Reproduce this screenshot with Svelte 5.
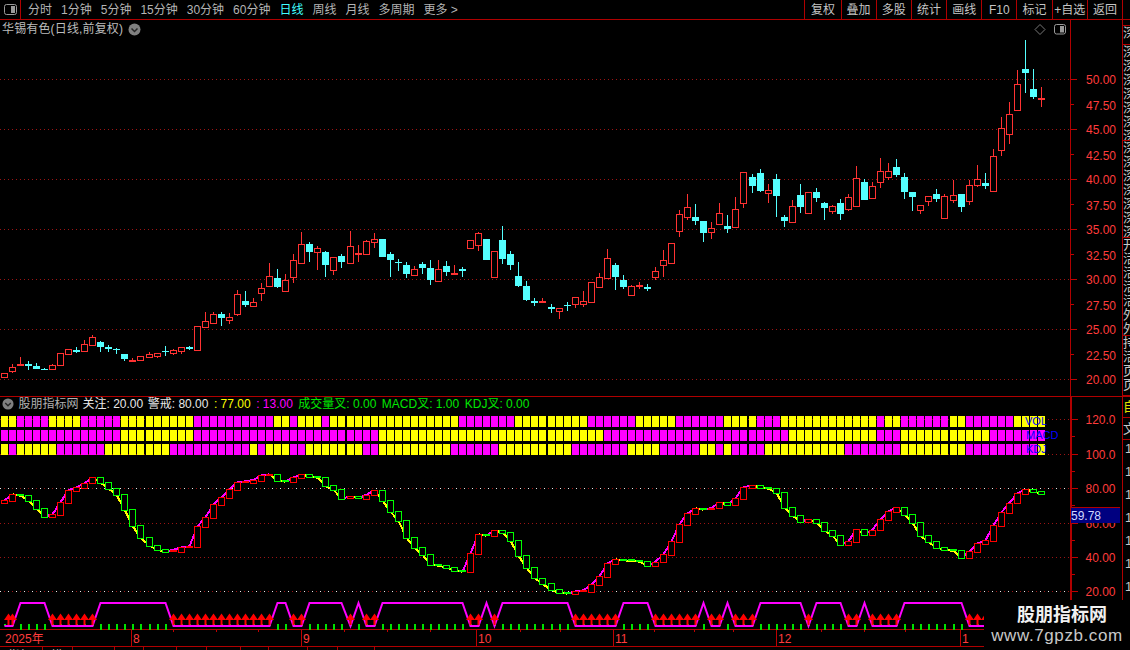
<script>
  const px = (i) => Math.floor(4.3 + 8.04 * i);

  const group = (y0, s) =>
    s.trim().split(/\s+/).map((t) => {
      const n = t.slice(1).split(',').map((v) => y0 + Number(v) / 3);
      return { up: t[0] === 'r', hi: n[0], top: n[1], bot: n[2], lo: n[3] };
    });

  const candles = [
    ...group(220, `r458,458,472,472 r432,440,452,458 r412,433,437,437 c424,432,437,450 c430,438,446,446 c445,447,449,449
      r433,436,448,449 r400,400,436,437 r388,388,403,403 c381,390,396,399 r361,373,394,395 r346,352,374,378 c363,366,380,396
      c376,380,386,396 c383,386,389,402 c402,402,416,423 r415,421,425,425 r409,409,421,422 r397,403,410,413 r399,400,407,414
      c378,393,396,408 r388,391,400,405 r382,382,392,402 c378,382,386,390 r319,319,389,389 r277,304,320,323 r277,283,308,308
      c277,282,293,318 r280,290,299,312 r210,223,281,287 c213,243,255,261 r235,247,257,257 r190,205,220,243 r129,169,197,197
      c148,174,200,204 r163,181,212,212 r102,121,170,189 r37,73,128,128 c67,72,96,126 r79,85,95,150 c94,96,134,171
      r112,112,149,164 c102,108,126,144 r33,79,128,128 r75,99,101,126 r60,64,101,105 r39,58,65,84 c57,57,111,111
      c96,102,120,171 c118,126,129,153 c126,135,162,174 r139,148,164,164 c126,132,144,162 c120,144,180,195 r120,148,182,183
      c123,138,156,168 r135,159,162,165 c141,147,153,171 r61,61,83,87 r37,40,74,93 c57,57,120,120 r93,94,170,170
      c18,60,117,132 c94,102,135,150 c126,168,198,201 c183,198,240,243 c235,243,249,258 r235,243,245,250 c252,261,267,279
      r265,265,272,297 c246,255,258,273 r232,232,251,264 r213,244,251,261 r186,187,245,245 r159,172,201,204 r87,115,173,173
      c129,135,171,210 c165,180,201,207 r195,199,224,224 r186,195,201,207 c192,201,207,213 r141,154,171,180 r90,121,134,171
      r69,69,128,128`),
    ...group(140, `r210,223,272,291 r162,202,230,240 c192,232,243,255 c243,243,279,306 r246,265,277,297 r189,220,251,255
      c225,258,267,279 r171,208,260,260 r97,97,188,204 c102,111,138,159 c87,99,153,156 r132,151,158,189 c102,117,168,231
      c225,231,243,261 r180,199,245,245 c132,165,201,219 r156,157,218,222 c144,156,174,186 c186,189,204,240 r195,199,212,222
      c177,189,222,240 r162,172,206,213 r78,115,197,197 c117,126,180,180 r126,139,173,177 r54,92,125,144 r69,92,110,120
      c57,81,105,111 c99,111,156,177 c156,156,171,213 r195,196,209,222 r169,169,182,198 c147,162,177,186 r162,169,233,237
      r120,166,179,189 c162,162,201,216 r120,136,182,195 r75,118,134,141 c99,129,138,147 r27,49,152,152`),
    ...group(0, `r351,384,449,468 r306,343,402,432 r210,253,331,331 c120,208,218,279 c207,268,290,297 r262,295,301,320`)
  ].map((c, i) => ({ ...c, x: px(i) }));

  const boxSrc = `r271,278 r253,272 g253,257 g256,272 g271,296 g295,320 r313,320 r277,314 r240,278 r232,242 r220,233 r202,220
    g202,218 g217,236 g235,254 g253,299 g298,347 g346,383 g382,407 g406,420 g418,425 r419,424 r412,425 r409,412 r349,410 r322,350
    r283,323 r262,284 r238,263 r217,239 r214,216 r210,218 r196,212 r193,196 g193,213 g211,215 r202,215 r193,203 g193,200 g199,203
    g202,228 g226,239 g238,266 r259,265 g259,265 r254,266 r241,254 g241,272 g271,305 g304,332 g331,383 g382,413 g412,434 g433,464
    g463,467 g466,473 g472,482 g481,485 r430,485 r373,431 g373,377 r361,377 g361,368 g367,392 g391,437 g436,473
    g472,503 g503,522 g520,540 g538,549 g546,551 r544,551 r541,544 r523,545 r499,524 r460,500 r448,461 g448,451 g449,453 g451,455
    g454,467 r455,467 r433,456 r394,434 r343,395 r310,344 r295,311 g295,299 r294,298 r277,295 g277,284 r265,284 r232,266 r226,233
    g226,233 g232,236 g235,248 g247,293 g292,317 g316,335 r328,335 g328,339 g337,362 g361,377 g376,404 r394,404 r358,395 g358,374
    r359,374 r328,360 r304,329 r292,305 g292,314 g313,339 g337,377 g376,396 g394,413 g412,419 g418,423 g421,443 r424,443 r400,425
    r391,401 r346,392 r307,347 r278,308 r250,279 r238,251 g238,245 g244,251`;

  const boxes = boxSrc.trim().split(/\s+/).map((t, i) => {
    const [a, b] = t.slice(1).split(',').map((v) => 410 + Number(v) / 3);
    const up = t[0] === 'r';
    return { up, top: a, bot: b, x: px(i), close: up ? a : b, flat: b - a <= 5 / 3 + 0.01 };
  });

  const segments = boxes.slice(1).map((b, i) => ({
    up: b.close < boxes[i].close,
    x1: boxes[i].x + 0.5,
    y1: boxes[i].close,
    x2: b.x + 0.5,
    y2: b.close
  }));

  const runs = (s) => s.trim().split(/\s+/).flatMap((t) => Array(Number(t.slice(1))).fill(t[0]));
  const rows = [
    { y: 416, cells: runs('Y2 M4 Y4 M5 Y9 M10 Y2 M1 Y3 M1 Y16 M7 Y9 M6 Y5 M6 Y4 M3 Y12 M1 Y2 M6 Y2 M6 Y4') },
    { y: 430, cells: runs('M15 Y9 M23 Y28 M23 Y11 M3 Y11 M7') },
    { y: 444, cells: runs('Y1 M1 Y5 M6 Y8 M10 Y1 M1 Y3 M2 Y7 M2 Y9 M6 Y9 M7 Y4 M5 Y2 M1 Y1 M4 Y10 M7 Y8 M9 Y1') }
  ];

  const lowRuns = [[0,1],[6,11],[21,33],[36,37],[43,43],[45,46],[58,59],[61,61],[71,76],[81,86],[88,89],[91,93],[100,100],[105,106],[108,111],[120,122]];
  const isLow = (i) => lowRuns.some(([a, b]) => i >= a && i <= b);
  const stripCols = Array.from({ length: 123 }, (_, i) => ({ x: px(i), low: isLow(i), i }));
  const stripLine = stripCols.map((c) => `${c.x + 0.5},${c.low ? 626 : 603}`).join(' ');
  const arrows = [{ x: 8 }, ...stripCols.filter((c) => c.low && c.i > 0)];

  const priceAxis = Array.from({ length: 13 }, (_, i) => ({
    y: 79 + i * 25,
    label: (50 - i * 2.5).toFixed(2),
    major: i % 2 === 0
  }));
  const priceGrid = priceAxis.filter((a) => a.major).map((a) => a.y);

  const indAxis = [
    { y: 419, label: '120.0' },
    { y: 454, label: '100.0' },
    { y: 488, label: '80.00' },
    { y: 523, label: '60.00' },
    { y: 557, label: '40.00' },
    { y: 591, label: '20.00' }
  ];
  const indMinor = [436, 471, 505, 540, 574];

  const tabs = ['分时', '1分钟', '5分钟', '15分钟', '30分钟', '60分钟', '日线', '周线', '月线', '多周期', '更多 >'];
  const tools = ['复权', '叠加', '多股', '统计', '画线', 'F10', '标记', '+自选', '返回'];

  const months = [
    { x: 131, t: '8' },
    { x: 301, t: '9' },
    { x: 476, t: '10' },
    { x: 613, t: '11' },
    { x: 776, t: '12' },
    { x: 960, t: '1' }
  ];
  const minor = [173, 216, 258, 344, 387, 430, 520, 560, 654, 694, 733, 821, 864, 905, 1000];

  const sideCells = [
    { h: 6, t: '' },
    { h: 19, t: '深' },
    { h: 96, t: '深深深深深深深' },
    { h: 97, t: '深深深深深深深' },
    { h: 98, t: '开活活活活外外' },
    { h: 60, t: '持活页页' }
  ];
  const sideNums = ['1', '1', '1', '1', '1', '1', '1'];
  const footerTabs = [43, 30, 42, 29, 33, 30, 34, 28, 39, 30, 37];
</script>

<div class="screen">
  <header class="topbar">
    <div class="toggle">
      <svg width="13" height="11" viewBox="0 0 13 11">
        <rect x="0.5" y="0.5" width="12" height="10" rx="2" fill="none" stroke="#9a9a9a" />
        <rect x="7" y="2" width="4" height="7" fill="#9a9a9a" />
      </svg>
    </div>
    <nav class="tabs">
      {#each tabs as t}
        <span class:active={t === '日线'}>{t}</span>
      {/each}
    </nav>
    <nav class="tools">
      {#each tools as t}
        <span>{t}</span>
      {/each}
    </nav>
  </header>

  <section class="row price-row">
    <div class="plot">
      <div class="title">
        <span class="title-text">华锡有色(日线,前复权)</span>
        <svg class="chev" width="13" height="13" viewBox="0 0 13 13">
          <circle cx="6.5" cy="6.5" r="6" fill="#808080" />
          <path d="M3.5 5.5 6.5 8.5 9.5 5.5" fill="none" stroke="#262626" stroke-width="1.5" />
        </svg>
        <svg class="ctl" width="34" height="13" viewBox="0 0 34 13">
          <path d="M6 1.5 11 6.5 6 11.5 1 6.5Z" fill="none" stroke="#777" />
          <rect x="20.5" y="1.5" width="11" height="9.5" rx="2" fill="none" stroke="#9a9a9a" />
          <rect x="26" y="3" width="4" height="6.5" fill="#9a9a9a" />
        </svg>
      </div>
      <svg class="canvas" width="1070" height="358" viewBox="0 38 1070 358">
        {#each priceGrid as y}
          <line class="dot-red" x1="0" x2="1070" y1={y + 0.5} y2={y + 0.5} />
        {/each}
        {#each candles as c}
          {#if c.up}
            <line class="wick-r" x1={c.x + 0.5} x2={c.x + 0.5} y1={Math.round(c.hi)} y2={Math.round(c.top)} />
            <line class="wick-r" x1={c.x + 0.5} x2={c.x + 0.5} y1={Math.round(c.bot)} y2={Math.round(c.lo)} />
            {#if c.bot - c.top <= 2}
              <rect class="fill-r" x={c.x - 3} y={Math.round(c.top)} width="7" height="2" />
            {:else}
              <rect class="body-r" x={c.x - 2.5} y={Math.round(c.top) + 0.5} width="6" height={Math.round(c.bot) - Math.round(c.top)} />
            {/if}
          {:else}
            <line class="wick-c" x1={c.x + 0.5} x2={c.x + 0.5} y1={Math.round(c.hi)} y2={Math.round(c.lo)} />
            <rect class="fill-c" x={c.x - 3} y={Math.round(c.top)} width="7" height={Math.max(1, Math.round(c.bot) - Math.round(c.top))} />
          {/if}
        {/each}
      </svg>
    </div>
    <svg class="axis" width="51" height="376" viewBox="0 20 51 376">
      {#each priceAxis as a}
        <line class="tick" x1="0" x2={a.major ? 6 : 3} y1={a.y + 0.5} y2={a.y + 0.5} />
        <text x="15" y={a.y + (a.major ? 5 : 6)}>{a.label}</text>
      {/each}
    </svg>
    <div class="side">
      {#each sideCells as c}
        <div class="cell" style="height:{c.h}px"><span>{c.t}</span></div>
      {/each}
    </div>
  </section>

  <section class="row ind-row">
    <div class="plot">
      <div class="ind-head">
        <svg width="12" height="12" viewBox="0 0 13 13">
          <circle cx="6.5" cy="6.5" r="6" fill="#808080" />
          <path d="M3.5 5.5 6.5 8.5 9.5 5.5" fill="none" stroke="#262626" stroke-width="1.5" />
        </svg>
        <span class="grey">股朋指标网</span>
        <span class="white">关注: 20.00</span>
        <span class="white">警戒: 80.00</span>
        <span class="yellow">: 77.00</span>
        <span class="magenta">: 13.00</span>
        <span class="green">成交量叉: 0.00</span>
        <span class="green">MACD叉: 1.00</span>
        <span class="green">KDJ叉: 0.00</span>
      </div>
      <svg class="canvas" width="1070" height="219" viewBox="0 411 1070 219">
        {#each indAxis as a, i}
          <line class="dot-red" x1="0" x2="1070" y1={a.y + 0.5} y2={a.y + 0.5} />
          {#if i === 2 || i === 5}
            <line class="dot-white" x1="0" x2="1070" y1={a.y + 0.5} y2={a.y + 0.5} />
          {/if}
        {/each}
        {#each rows as r}
          {#each r.cells as c, i}
            <rect x={px(i) - 3} y={r.y} width="7" height="11" fill={c === 'Y' ? '#ffff00' : '#ff00ff'} />
          {/each}
        {/each}
        <text class="ind-tag" x="1025" y="425">VOL</text>
        <text class="ind-tag" x="1026" y="439">MACD</text>
        <text class="ind-tag" x="1026" y="453">KDJ</text>
        {#each segments as s}
          <line class="seg" stroke={s.up ? '#ff00ff' : '#ffff00'} x1={s.x1} y1={s.y1} x2={s.x2} y2={s.y2} />
        {/each}
        {#each boxes as b}
          {#if b.flat}
            <rect x={b.x - 3} y={Math.round((b.top + b.bot) / 2) - 1} width="7" height="2" fill={b.up ? '#ff0000' : '#00ff00'} />
          {:else}
            <rect class="box" stroke={b.up ? '#ff0000' : '#00ff00'} x={b.x - 2.5} y={Math.round(b.top) + 0.5} width="6" height={Math.max(1, Math.round(b.bot) - Math.round(b.top))} />
          {/if}
        {/each}
        {#each stripCols as c}
          <rect x={c.x} y="624" width="2" height={c.low ? 2 : 6} fill="#00e000" />
        {/each}
        <polyline class="strip" points={stripLine} />
        {#each arrows as a}
          <path class="arrow" d="M{a.x + 0.5} 613.5 {a.x + 5} 620H{a.x + 1.5}V625H{a.x - 0.5}V620H{a.x - 4}Z" />
        {/each}
      </svg>
    </div>
    <div class="ind-axis">
      <svg class="axis" width="50" height="233" viewBox="0 397 50 233">
        {#each indAxis as a}
          <line class="tick" x1="0" x2="6" y1={a.y + 0.5} y2={a.y + 0.5} />
          <text x="13.5" y={a.y + 5}>{a.label}</text>
        {/each}
        {#each indMinor as y}
          <line class="tick" x1="0" x2="3" y1={y + 0.5} y2={y + 0.5} />
        {/each}
      </svg>
      <div class="last-value">59.78</div>
    </div>
    <div class="side side-low">
      <div class="cell low-a"><span>自</span></div>
      <div class="cell low-b"><span>文</span></div>
      <div class="nums">
        {#each sideNums as n}
          <span>{n}</span>
        {/each}
      </div>
    </div>
  </section>

  <svg class="timeline" width="1130" height="16" viewBox="0 631 1130 16">
    <text x="5" y="644">2025年</text>
    {#each months as m}
      <line class="tick" x1={m.x + 0.5} x2={m.x + 0.5} y1="631" y2="647" />
      <text x={m.x + 2} y="644">{m.t}</text>
    {/each}
    {#each minor as x}
      <line class="tick" x1={x + 0.5} x2={x + 0.5} y1="631" y2="633" />
    {/each}
  </svg>

  <footer class="foot">
    {#each footerTabs as w, i}
      <span style="width:{w}px">{i === 0 ? '指标' : i === 1 ? '模' : ''}</span>
    {/each}
  </footer>

  <aside class="watermark">
    <div class="wm-a">股朋指标网</div>
    <div class="wm-b">www.7gpzb.com</div>
  </aside>
</div>

<style>
  :global(body) {
    margin: 0;
    background: #000;
  }
  .screen {
    position: relative;
    width: 1130px;
    height: 650px;
    overflow: hidden;
    background: #000;
    color: #c0c0c0;
    font: 12px/14px "Liberation Sans", "Noto Sans CJK SC", sans-serif;
  }
  .topbar {
    display: flex;
    align-items: stretch;
    height: 20px;
    box-sizing: border-box;
    border-bottom: 1px solid #b00000;
  }
  .toggle {
    width: 21px;
    box-sizing: border-box;
    border-right: 1px solid #b00000;
    display: flex;
    align-items: center;
    justify-content: center;
  }
  .tabs {
    display: flex;
    align-items: center;
    gap: 9px;
    padding-left: 7px;
    color: #b4b4b4;
    white-space: pre;
  }
  .tabs .active {
    color: #40ffff;
  }
  .tools {
    display: flex;
    margin-left: auto;
    margin-right: 7px;
    border-left: 1px solid #b00000;
    border-right: 1px solid #b00000;
  }
  .tools span {
    width: 35.2px;
    display: flex;
    align-items: center;
    justify-content: center;
    color: #c4c4c4;
    white-space: nowrap;
  }
  .tools span + span {
    border-left: 1px solid #b00000;
    box-sizing: border-box;
  }
  .row {
    display: flex;
    width: 1130px;
  }
  .price-row {
    height: 377px;
    box-sizing: border-box;
    border-bottom: 1px solid #b00000;
  }
  .ind-row {
    height: 233px;
  }
  .plot {
    width: 1070px;
    flex: none;
  }
  .title {
    display: flex;
    align-items: center;
    height: 18px;
    padding-left: 2px;
    gap: 5px;
    color: #bcbcbc;
  }
  .title-text {
    letter-spacing: 0.15px;
  }
  .ctl {
    margin-left: auto;
    margin-right: 2px;
  }
  .canvas,
  .axis,
  .timeline {
    display: block;
  }
  .canvas rect,
  .canvas line {
    shape-rendering: crispEdges;
  }
  .dot-red {
    stroke: #9c1414;
    stroke-dasharray: 1 3;
  }
  .dot-white {
    stroke: #e8e8e8;
    stroke-dasharray: 1 7;
  }
  .wick-r {
    stroke: #ff3232;
  }
  .wick-c {
    stroke: #54ffff;
  }
  .fill-r {
    fill: #ff3232;
  }
  .fill-c {
    fill: #54ffff;
  }
  .body-r {
    fill: #000;
    stroke: #ff3232;
  }
  .seg {
    stroke-width: 2;
  }
  .box {
    fill: #000;
  }
  .strip {
    fill: none;
    stroke: #ff00ff;
    stroke-width: 2;
  }
  .arrow {
    fill: #ff0000;
  }
  .ind-tag {
    fill: #0000ff;
    font-size: 11px;
  }
  .axis {
    flex: none;
    border-left: 1px solid #b00000;
  }
  .axis text,
  .timeline text {
    fill: #ff3c3c;
    font-size: 12px;
    font-family: "Liberation Sans", "Noto Sans CJK SC", sans-serif;
  }
  .tick {
    stroke: #c00000;
  }
  .side {
    flex: none;
    width: 8px;
    border-left: 1px solid #b00000;
    overflow: hidden;
    display: flex;
    flex-direction: column;
  }
  .cell {
    box-sizing: border-box;
    border-bottom: 1px solid #b00000;
    overflow: hidden;
    flex: none;
  }
  .cell span {
    display: block;
    width: 13px;
    line-height: 14px;
    color: #c8c8c8;
    font-size: 13px;
  }
  .ind-head {
    display: flex;
    align-items: center;
    gap: 4.5px;
    height: 14px;
    padding-left: 2px;
    white-space: pre;
  }
  .grey {
    color: #b0b0b0;
    margin-right: -0.5px;
  }
  .white {
    color: #e8e8e8;
  }
  .yellow {
    color: #ffff00;
    margin-left: 1px;
  }
  .magenta {
    color: #ff00ff;
    margin-left: 1px;
  }
  .green {
    color: #00e800;
    margin-left: 1px;
  }
  .ind-axis {
    position: relative;
    flex: none;
    width: 51px;
    border-left: 1px solid #b00000;
  }
  .last-value {
    position: absolute;
    left: 0;
    top: 110px;
    width: 49px;
    height: 16px;
    line-height: 17px;
    background: #000080;
    border-top: 1px solid #b00000;
    box-sizing: border-box;
    color: #d0d8ff;
  }
  .side-low {
    width: 7px;
    border-left: 1px solid #b00000;
    font-size: 13px;
  }
  .low-a {
    height: 21px;
    padding-top: 3px;
  }
  .low-a span {
    color: #e0e000;
  }
  .low-b {
    height: 22px;
    padding-top: 4px;
  }
  .nums {
    display: flex;
    flex-direction: column;
    padding-top: 2px;
    gap: 9px;
    color: #c8c8c8;
    padding-left: 2px;
  }
  .timeline {
    border-top: 1px solid #b00000;
    border-bottom: 1px solid #b00000;
    box-sizing: content-box;
    margin-top: -1px;
  }
  .foot {
    display: flex;
    height: 5px;
    overflow: hidden;
    color: #c0c0c0;
  }
  .foot span {
    box-sizing: border-box;
    border-right: 1px solid #b00000;
    padding-left: 8px;
    line-height: 18px;
    white-space: nowrap;
  }
  .watermark {
    position: absolute;
    right: 0;
    bottom: 0;
    width: 146px;
    height: 50px;
    background: #000;
    display: flex;
    flex-direction: column;
    align-items: center;
  }
  .wm-a {
    margin-top: 4px;
    font-size: 18px;
    line-height: 22px;
    font-weight: bold;
    color: #f0f0f0;
    padding-left: 10px;
  }
  .wm-b {
    margin-top: 1px;
    font-size: 17px;
    line-height: 18px;
    letter-spacing: 0.6px;
    color: #c8c8c8;
  }
</style>
